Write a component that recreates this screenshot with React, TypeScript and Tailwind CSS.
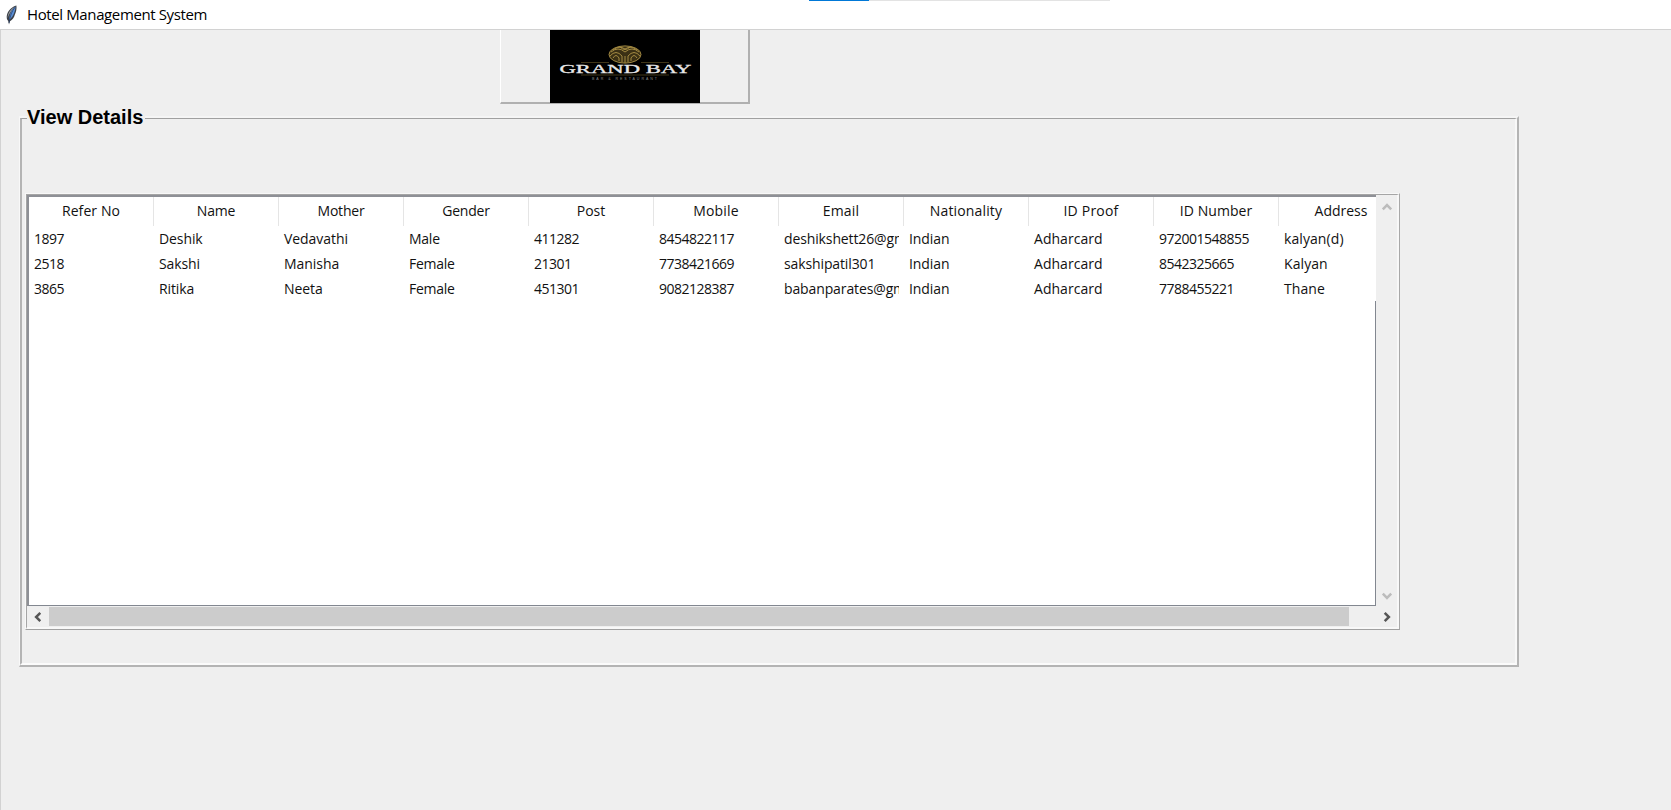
import React from "react";

type Column = { label: string; heading: string; rows: [string, string, string]; body: string };

const columns: Column[] = [
  { label: "Refer No", heading: "tracking-[0.1px]", rows: ["1897", "2518", "3865"], body: "tracking-[-0.5px]" },
  { label: "Name", heading: "tracking-[-0.2px]", rows: ["Deshik", "Sakshi", "Ritika"], body: "tracking-[-0.1px]" },
  { label: "Mother", heading: "tracking-[-0.2px]", rows: ["Vedavathi", "Manisha", "Neeta"], body: "tracking-[-0.05px]" },
  { label: "Gender", heading: "tracking-[-0.2px]", rows: ["Male", "Female", "Female"], body: "tracking-[-0.25px]" },
  { label: "Post", heading: "tracking-[0px]", rows: ["411282", "21301", "451301"], body: "tracking-[-0.5px]" },
  { label: "Mobile", heading: "tracking-[0.2px]", rows: ["8454822117", "7738421669", "9082128387"], body: "tracking-[-0.5px]" },
  { label: "Email", heading: "tracking-[0.2px]", rows: ["deshikshett26@gm", "sakshipatil301", "babanparates@gm"], body: "tracking-[-0.12px]" },
  { label: "Nationality", heading: "tracking-[0.15px]", rows: ["Indian", "Indian", "Indian"], body: "tracking-[-0.1px]" },
  { label: "ID Proof", heading: "tracking-[0.2px]", rows: ["Adharcard", "Adharcard", "Adharcard"], body: "tracking-[0.03px]" },
  { label: "ID Number", heading: "tracking-[0.05px]", rows: ["972001548855", "8542325665", "7788455221"], body: "tracking-[-0.5px]" },
  { label: "Address", heading: "tracking-[0px]", rows: ["kalyan(d)", "Kalyan", "Thane"], body: "tracking-[0.08px]" },
];

function Feather() {
  return (
    <svg width="14" height="20" viewBox="0 0 14 20" className="shrink-0">
      <path d="M11.4 0.5C7.2 1.6 3.4 5 2.1 9.3C1.3 12.3 1.7 14.5 3.2 16L4 19.4L5 16.2C7.4 15 9.2 12.4 9.8 9.8C11 7.6 11.9 3.5 11.4 0.5Z" fill="#3c4047" />
      <path d="M10.6 1.6C7.2 4 4.6 8 4.2 14.9C7.6 12.4 10 8 10.6 1.6Z" fill="#5b8fd6" />
      <path d="M9.4 1.9C5.4 4.2 2.9 8 2.6 13C4.1 8.6 6.4 5.3 9.4 1.9Z" fill="#9a9ea3" />
      <path d="M9.9 2.4C7 6 4.9 11 4 18" stroke="#1e3a66" strokeWidth=".7" fill="none" />
    </svg>
  );
}

function Logo() {
  return (
    <svg width="150" height="73" viewBox="0 0 150 73" className="bg-black">
      <ellipse cx="75" cy="24.5" rx="16" ry="8.5" fill="#3b3014" />
      <g fill="none" stroke="#a38a42" strokeWidth="1">
        <ellipse cx="75" cy="24.5" rx="16" ry="8.6" />
        <path d="M61 22Q68 16 75 22Q82 16 89 22M63 20Q69 15 75 19Q81 15 87 20M60 26Q66 19 72 26V32M90 26Q84 19 78 26V32M63 28Q66 23 69 28V31M87 28Q84 23 81 28V31M75 26V33M70 17Q75 22 80 17" />
      </g>
      <path d="M31 32.5H59M91 32.5H119M31 45H119" stroke="#5c4d24" strokeWidth=".7" />
      <text x="9.5" y="42.5" textLength="132" lengthAdjust="spacingAndGlyphs" fill="#e8e8e8" fontFamily="Liberation Serif, serif" fontWeight="400" fontSize="12.5" stroke="#e8e8e8" strokeWidth=".3">
        GRAND BAY
      </text>
      <text x="42" y="49.5" textLength="65" lengthAdjust="spacing" fill="#8a8a8a" fontFamily="Liberation Sans, sans-serif" fontSize="3.6">BAR &amp; RESTAURANT</text>
    </svg>
  );
}

function Chevron({ className }: { className: string }) {
  return (
    <svg width="12" height="12" viewBox="0 0 12 12" className={className}>
      <path d="M1.8 8.3L6 4.1L10.2 8.3" fill="none" stroke="currentColor" strokeWidth="2.5" />
    </svg>
  );
}

export default function App() {
  return (
    <div className="flex h-[810px] w-[1671px] flex-col overflow-hidden bg-[#efefef] font-['Open_Sans',sans-serif] text-black">
      <header className="relative flex h-[29px] shrink-0 items-center bg-white pl-[5px]">
        <Feather />
        <span className="ml-2 text-[15px] tracking-[-0.38px] whitespace-nowrap">Hotel Management System</span>
        <div className="absolute top-0 left-[809px] flex h-px w-[301px] bg-[#e3e3e3]">
          <div className="w-[60px] bg-[#0078d7]" />
        </div>
      </header>

      <main className="flex flex-1 flex-col border-t border-l border-[#d2d2d2]">
        <div className="ml-[499px] flex h-[74px] w-[250px] justify-center border-r-2 border-b-2 border-l border-r-[#b0b0b0] border-b-[#b0b0b0] border-l-white">
          <Logo />
        </div>

        <section className="mt-[12px] ml-[18px] h-[551px] w-[1500px] border-t-2 border-r-2 border-b-2 border-l border-t-[#f5f5f5] border-r-[#b4b4b4] border-b-[#b4b4b4] border-l-[#f8f8f8]">
          <div className="flex h-full flex-col border-t border-r-2 border-b-2 border-l-2 border-t-[#a0a0a0] border-r-[#f8f8f8] border-b-[#fbfbfb] border-l-[#b4b4b4]">
            <h1 className="-mt-[14px] ml-[5px] h-[24px] w-[118px] bg-[#efefef] font-['Liberation_Sans',sans-serif] text-[20px] leading-[24px] font-bold whitespace-nowrap">
              View Details
            </h1>

            <div className="mt-[64px] ml-[3px] flex h-[437px] w-[1375px] flex-col border-t border-r border-b border-l border-t-[#f8f8f8] border-r-[#a8a8a8] border-b-[#a0a0a0] border-l-[#f8f8f8]">
              <div className="flex h-full flex-col border-t border-r-2 border-b-2 border-l border-t-[#a5a5a5] border-r-[#f8f8f8] border-b-[#f8f8f8] border-l-[#a5a5a5]">
                <div className="flex h-[411px] shrink-0">
                  <div className="flex w-[1349px] flex-col border-t-2 border-b border-l-2 border-t-[#8e9096] border-b-[#828790] border-l-[#8e9096] bg-white text-[14px] text-[#111]">
                    <div className="flex shrink-0 overflow-hidden">
                      {columns.map((column) => (
                        <div key={column.label} className="w-[125px] shrink-0">
                          <div className={`flex h-[29px] items-center justify-center border-r border-[#e5e5e5] pb-[2px] whitespace-nowrap ${column.heading}`}>
                            {column.label}
                          </div>
                          {column.rows.map((value, index) => (
                            <div key={index} className={`mr-[5px] h-[25px] overflow-hidden pl-[5px] leading-[25px] whitespace-nowrap ${column.body}`}>
                              {value}
                            </div>
                          ))}
                        </div>
                      ))}
                    </div>
                    <div className="flex-1 border-r border-[#828790]" />
                  </div>
                  <div className="flex w-[22px] flex-col items-center justify-between bg-[#efefef] pt-[6px] pb-[4px] text-[#bcbcbc]">
                    <Chevron className="" />
                    <Chevron className="rotate-180" />
                  </div>
                </div>
                <div className="mt-px flex h-[19px] items-center bg-[#efefef] text-[#555]">
                  <Chevron className="ml-[5px] -rotate-90" />
                  <div className="ml-[5px] h-full w-[1300px] bg-[#cccccc]" />
                  <Chevron className="mr-[4px] ml-auto rotate-90" />
                </div>
              </div>
            </div>
          </div>
        </section>
      </main>
    </div>
  );
}
